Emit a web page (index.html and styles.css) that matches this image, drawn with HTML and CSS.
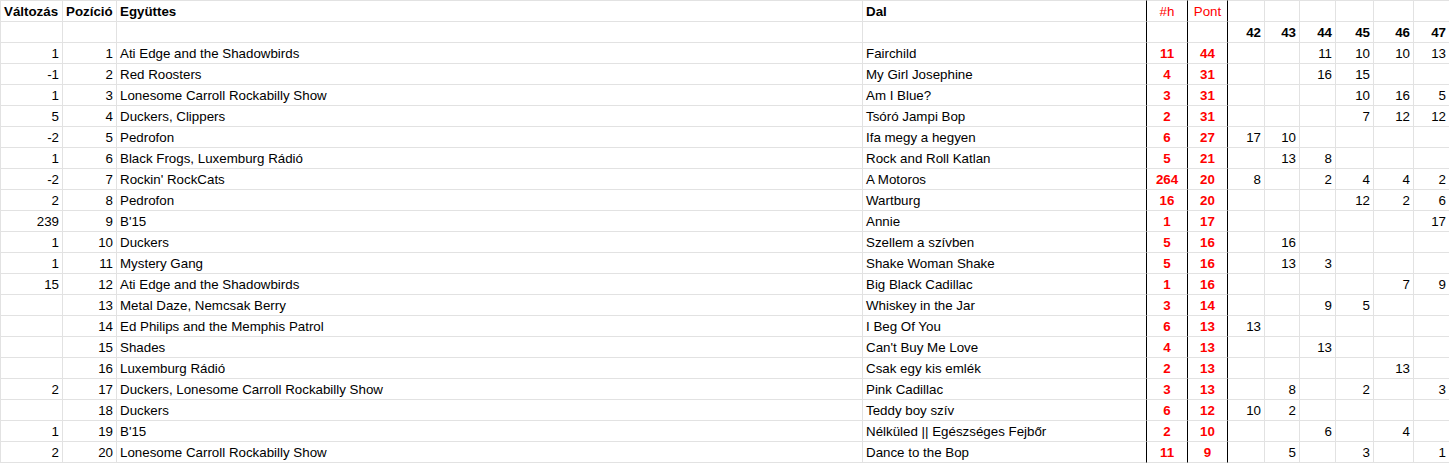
FILE: index.html
```html
<!DOCTYPE html>
<html lang="hu">
<head>
<meta charset="utf-8">
<title>Lista</title>
<link rel="stylesheet" href="styles.css">
</head>
<body>
<table class="chart">
<colgroup>
<col class="w-chg"><col class="w-pos"><col class="w-band"><col class="w-song"><col class="w-h"><col class="w-pt">
<col class="w-42"><col class="w-43"><col class="w-44"><col class="w-45"><col class="w-46"><col class="w-47">
</colgroup>
<thead>
<tr class="head">
<td class="b">Változás</td><td class="b">Pozíció</td><td class="b">Együttes</td><td class="b sep">Dal</td><td class="red c sep">#h</td><td class="red c sep">Pont</td>
<td></td><td></td><td></td><td></td><td></td><td></td>
</tr>
<tr>
<td></td><td></td><td></td><td class="sep"></td><td class="sep"></td><td class="sep"></td>
<td class="r b">42</td><td class="r b">43</td><td class="r b">44</td><td class="r b">45</td><td class="r b">46</td><td class="r b">47</td>
</tr>
</thead>
<tbody>
<tr><td class="r">1</td><td class="r">1</td><td>Ati Edge and the Shadowbirds</td><td class="sep">Fairchild</td><td class="red c b sep">11</td><td class="red c b sep">44</td><td class="r"></td><td class="r"></td><td class="r">11</td><td class="r">10</td><td class="r">10</td><td class="r">13</td></tr>
<tr><td class="r">-1</td><td class="r">2</td><td>Red Roosters</td><td class="sep">My Girl Josephine</td><td class="red c b sep">4</td><td class="red c b sep">31</td><td class="r"></td><td class="r"></td><td class="r">16</td><td class="r">15</td><td class="r"></td><td class="r"></td></tr>
<tr><td class="r">1</td><td class="r">3</td><td>Lonesome Carroll Rockabilly Show</td><td class="sep">Am I Blue?</td><td class="red c b sep">3</td><td class="red c b sep">31</td><td class="r"></td><td class="r"></td><td class="r"></td><td class="r">10</td><td class="r">16</td><td class="r">5</td></tr>
<tr><td class="r">5</td><td class="r">4</td><td>Duckers, Clippers</td><td class="sep">Tsóró Jampi Bop</td><td class="red c b sep">2</td><td class="red c b sep">31</td><td class="r"></td><td class="r"></td><td class="r"></td><td class="r">7</td><td class="r">12</td><td class="r">12</td></tr>
<tr><td class="r">-2</td><td class="r">5</td><td>Pedrofon</td><td class="sep">Ifa megy a hegyen</td><td class="red c b sep">6</td><td class="red c b sep">27</td><td class="r">17</td><td class="r">10</td><td class="r"></td><td class="r"></td><td class="r"></td><td class="r"></td></tr>
<tr><td class="r">1</td><td class="r">6</td><td>Black Frogs, Luxemburg Rádió</td><td class="sep">Rock and Roll Katlan</td><td class="red c b sep">5</td><td class="red c b sep">21</td><td class="r"></td><td class="r">13</td><td class="r">8</td><td class="r"></td><td class="r"></td><td class="r"></td></tr>
<tr><td class="r">-2</td><td class="r">7</td><td>Rockin' RockCats</td><td class="sep">A Motoros</td><td class="red c b sep">264</td><td class="red c b sep">20</td><td class="r">8</td><td class="r"></td><td class="r">2</td><td class="r">4</td><td class="r">4</td><td class="r">2</td></tr>
<tr><td class="r">2</td><td class="r">8</td><td>Pedrofon</td><td class="sep">Wartburg</td><td class="red c b sep">16</td><td class="red c b sep">20</td><td class="r"></td><td class="r"></td><td class="r"></td><td class="r">12</td><td class="r">2</td><td class="r">6</td></tr>
<tr><td class="r">239</td><td class="r">9</td><td>B'15</td><td class="sep">Annie</td><td class="red c b sep">1</td><td class="red c b sep">17</td><td class="r"></td><td class="r"></td><td class="r"></td><td class="r"></td><td class="r"></td><td class="r">17</td></tr>
<tr><td class="r">1</td><td class="r">10</td><td>Duckers</td><td class="sep">Szellem a szívben</td><td class="red c b sep">5</td><td class="red c b sep">16</td><td class="r"></td><td class="r">16</td><td class="r"></td><td class="r"></td><td class="r"></td><td class="r"></td></tr>
<tr><td class="r">1</td><td class="r">11</td><td>Mystery Gang</td><td class="sep">Shake Woman Shake</td><td class="red c b sep">5</td><td class="red c b sep">16</td><td class="r"></td><td class="r">13</td><td class="r">3</td><td class="r"></td><td class="r"></td><td class="r"></td></tr>
<tr><td class="r">15</td><td class="r">12</td><td>Ati Edge and the Shadowbirds</td><td class="sep">Big Black Cadillac</td><td class="red c b sep">1</td><td class="red c b sep">16</td><td class="r"></td><td class="r"></td><td class="r"></td><td class="r"></td><td class="r">7</td><td class="r">9</td></tr>
<tr><td class="r"></td><td class="r">13</td><td>Metal Daze, Nemcsak Berry</td><td class="sep">Whiskey in the Jar</td><td class="red c b sep">3</td><td class="red c b sep">14</td><td class="r"></td><td class="r"></td><td class="r">9</td><td class="r">5</td><td class="r"></td><td class="r"></td></tr>
<tr><td class="r"></td><td class="r">14</td><td>Ed Philips and the Memphis Patrol</td><td class="sep">I Beg Of You</td><td class="red c b sep">6</td><td class="red c b sep">13</td><td class="r">13</td><td class="r"></td><td class="r"></td><td class="r"></td><td class="r"></td><td class="r"></td></tr>
<tr><td class="r"></td><td class="r">15</td><td>Shades</td><td class="sep">Can't Buy Me Love</td><td class="red c b sep">4</td><td class="red c b sep">13</td><td class="r"></td><td class="r"></td><td class="r">13</td><td class="r"></td><td class="r"></td><td class="r"></td></tr>
<tr><td class="r"></td><td class="r">16</td><td>Luxemburg Rádió</td><td class="sep">Csak egy kis emlék</td><td class="red c b sep">2</td><td class="red c b sep">13</td><td class="r"></td><td class="r"></td><td class="r"></td><td class="r"></td><td class="r">13</td><td class="r"></td></tr>
<tr><td class="r">2</td><td class="r">17</td><td>Duckers, Lonesome Carroll Rockabilly Show</td><td class="sep">Pink Cadillac</td><td class="red c b sep">3</td><td class="red c b sep">13</td><td class="r"></td><td class="r">8</td><td class="r"></td><td class="r">2</td><td class="r"></td><td class="r">3</td></tr>
<tr><td class="r"></td><td class="r">18</td><td>Duckers</td><td class="sep">Teddy boy szív</td><td class="red c b sep">6</td><td class="red c b sep">12</td><td class="r">10</td><td class="r">2</td><td class="r"></td><td class="r"></td><td class="r"></td><td class="r"></td></tr>
<tr><td class="r">1</td><td class="r">19</td><td>B'15</td><td class="sep">Nélküled || Egészséges Fejbőr</td><td class="red c b sep">2</td><td class="red c b sep">10</td><td class="r"></td><td class="r"></td><td class="r">6</td><td class="r"></td><td class="r">4</td><td class="r"></td></tr>
<tr><td class="r">2</td><td class="r">20</td><td>Lonesome Carroll Rockabilly Show</td><td class="sep">Dance to the Bop</td><td class="red c b sep">11</td><td class="red c b sep">9</td><td class="r"></td><td class="r">5</td><td class="r"></td><td class="r">3</td><td class="r"></td><td class="r">1</td></tr>
</tbody>
</table>
</body>
</html>
```
FILE: styles.css
```css
html, body {
  margin: 0;
  padding: 0;
  background: #ffffff;
}
.chart {
  border-collapse: separate;
  border-spacing: 0;
  table-layout: fixed;
  width: 1450px;
  font-family: "Liberation Sans", Arial, sans-serif;
  font-size: 13.33px;
  color: #000000;
}
.w-chg { width: 63px; }
.w-pos { width: 54px; }
.w-band { width: 746px; }
.w-song { width: 284px; }
.w-h { width: 41px; }
.w-pt { width: 40px; }
.w-42 { width: 37px; }
.w-43 { width: 35px; }
.w-44 { width: 36px; }
.w-45 { width: 38px; }
.w-46 { width: 40px; }
.w-47 { width: 36px; }
.chart td {
  padding: 2px 3px 0;
  line-height: 18px;
  border-right: 1px solid #e2e2e2;
  border-bottom: 1px solid #e2e2e2;
  white-space: nowrap;
  overflow: hidden;
  vertical-align: middle;
}
.chart td:first-child {
  border-left: 1px solid #e2e2e2;
}
.chart .head td {
  border-top: 1px solid #e2e2e2;
}
.chart td.sep {
  border-right-color: #000000;
}
.r { text-align: right; }
.c { text-align: center; }
.b { font-weight: bold; }
.red { color: #ff0000; }
```
